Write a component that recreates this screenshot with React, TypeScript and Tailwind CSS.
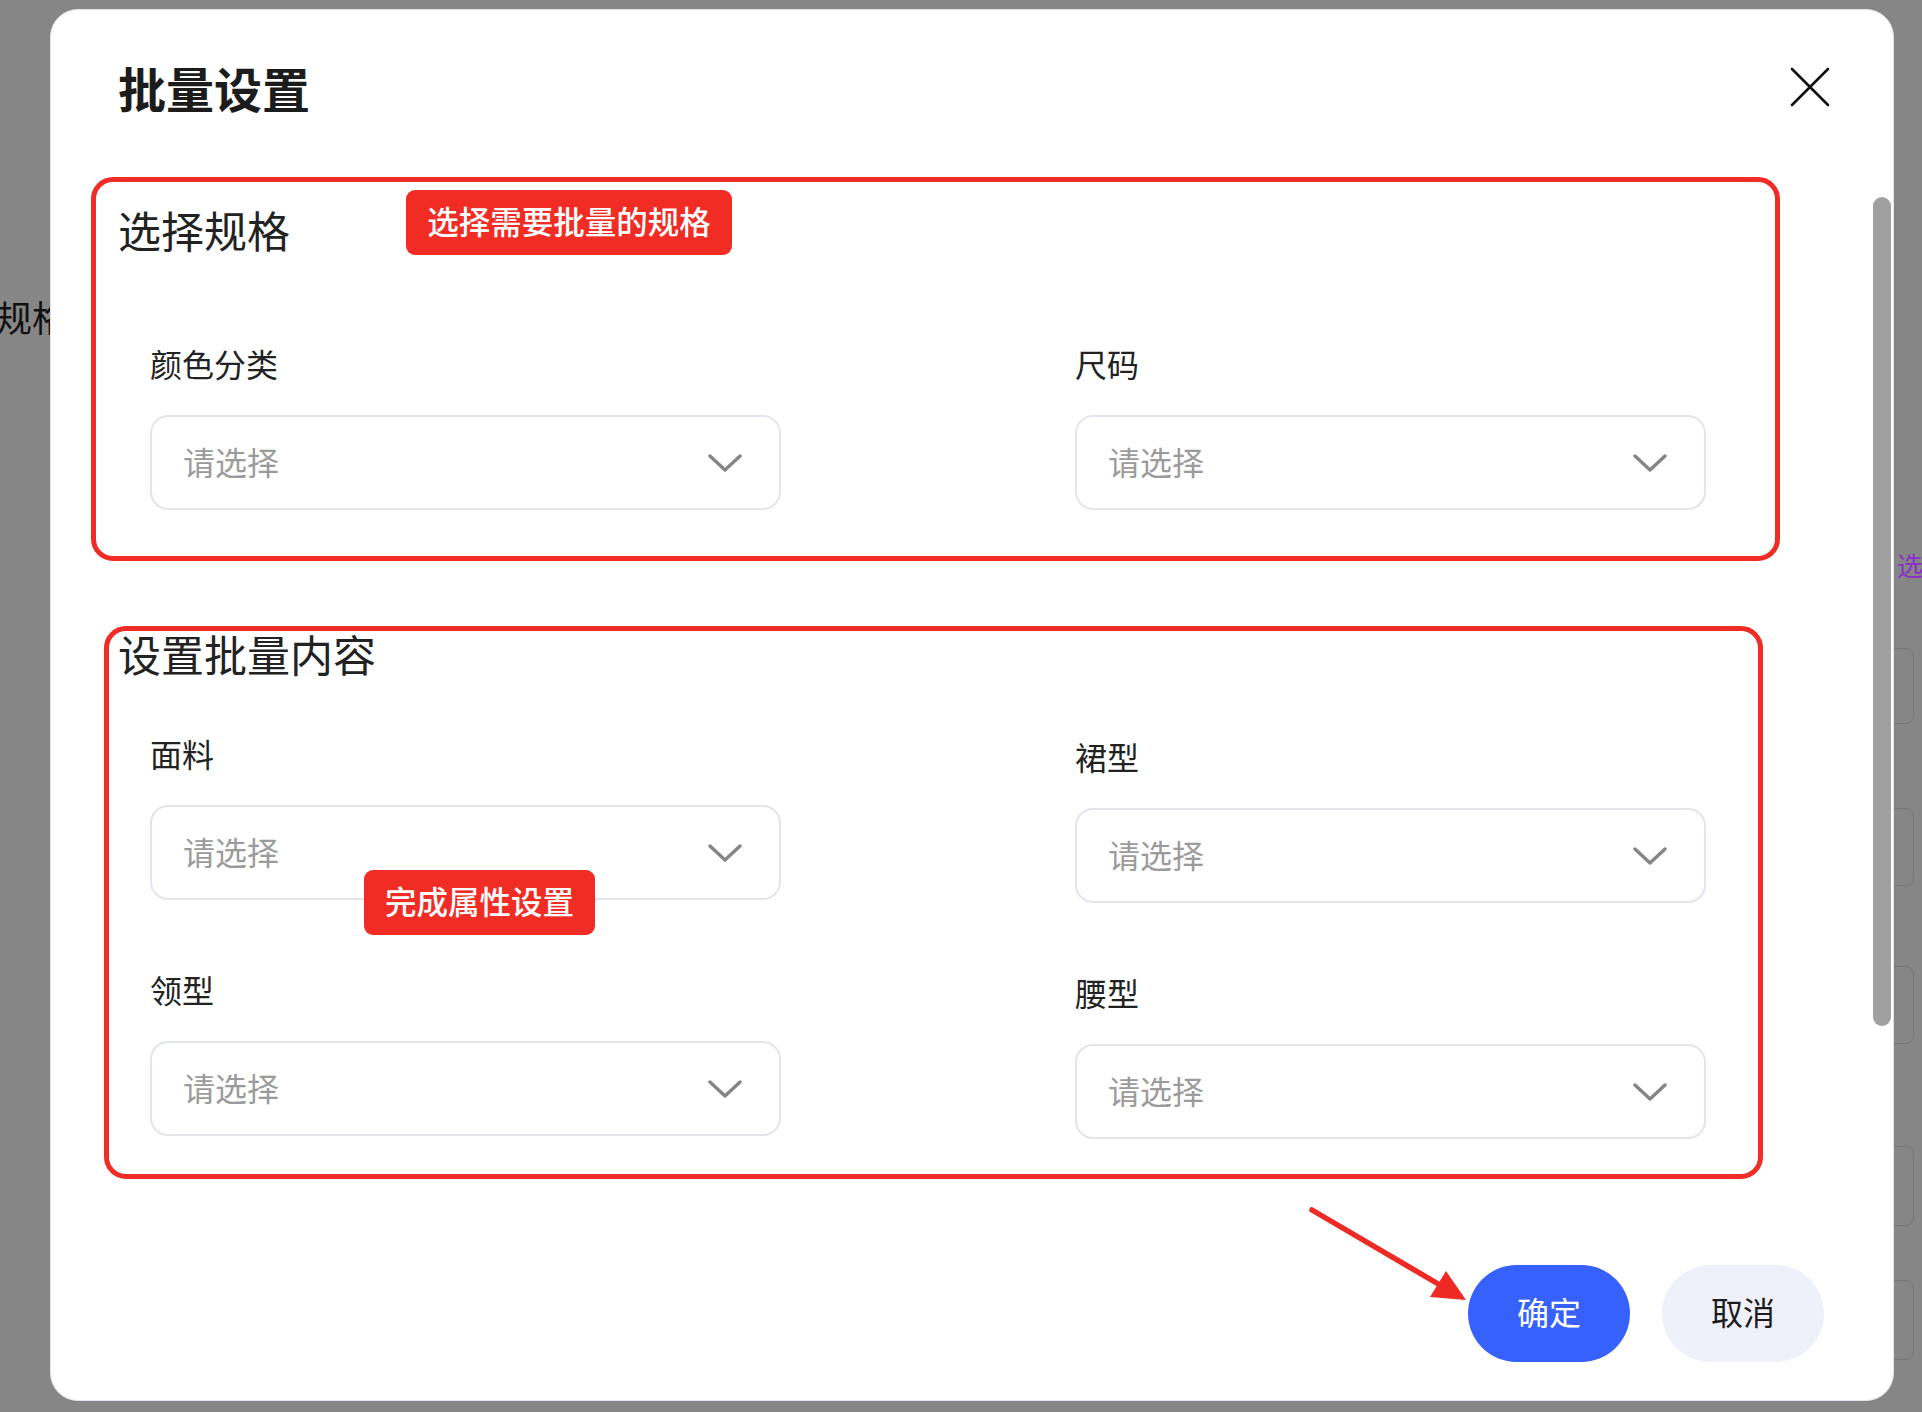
import React from 'react';

const Chevron: React.FC = () => (
  <svg width="34" height="20" viewBox="0 0 34 20" fill="none">
    <polyline points="2,3 17,17 32,3" stroke="#858585" strokeWidth="3.4" strokeLinecap="round" strokeLinejoin="round" />
  </svg>
);

const SelectField: React.FC<{ label: string }> = ({ label }) => (
  <div className="flex flex-col">
    <span className="-translate-y-[1px] text-[32px] leading-none text-[#222]">{label}</span>
    <div className="mt-[35px] flex h-[95px] w-[631px] items-center justify-between rounded-[18px] border-2 border-[#e3e5ee] bg-white pl-[31px] pr-[37px]">
      <span className="-translate-y-[2px] text-[32px] leading-none text-[#9b9b9b]">请选择</span>
      <Chevron />
    </div>
  </div>
);

const Badge: React.FC<{ text: string; className: string }> = ({ text, className }) => (
  <div className={`absolute flex h-[65px] items-center justify-center rounded-[9px] bg-[#f02c25] pb-[3px] text-[31.5px] font-medium leading-none text-white ${className}`}>
    {text}
  </div>
);

export default function App() {
  return (
    <div className="relative h-[1412px] w-[1922px] overflow-hidden bg-[#868686] pl-[50px] pt-[9px] font-['Noto_Sans_CJK_SC','Noto_Sans',sans-serif]">
      {/* page behind the overlay */}
      <span className="absolute left-[-4px] top-[298px] text-[36px] leading-none text-[#111]">规格</span>
      <span className="absolute left-[1897px] top-[552px] text-[26px] leading-none text-[#8b2fc9]">选</span>
      <div className="absolute left-[1872px] top-[648px] h-[76px] w-[42px] rounded-[8px] border border-[#767676]" />
      <div className="absolute left-[1872px] top-[808px] h-[78px] w-[42px] rounded-[8px] border border-[#767676]" />
      <div className="absolute left-[1872px] top-[966px] h-[78px] w-[42px] rounded-[8px] border border-[#767676]" />
      <div className="absolute left-[1872px] top-[1146px] h-[80px] w-[42px] rounded-[8px] border border-[#767676]" />
      <div className="absolute left-[1872px] top-[1280px] h-[80px] w-[42px] rounded-[8px] border border-[#767676]" />

      {/* dialog */}
      <div className="relative flex h-[1392px] w-[1844px] flex-col rounded-[28px] border border-[#e2e3ec] bg-white pl-[40px] pt-[53px]">
        <div className="flex items-center justify-between pl-[27px] pr-[63px]">
          <h1 className="text-[48px] font-bold leading-none text-[#1c1c1c]">批量设置</h1>
          <svg width="40" height="40" viewBox="0 0 40 40" fill="none">
            <path d="M2 2L38 38M38 2L2 38" stroke="#111" strokeWidth="2.6" strokeLinecap="round" />
          </svg>
        </div>

        {/* 选择规格 */}
        <div className="relative mt-[66px] flex h-[384px] w-[1689px] flex-col rounded-[22px] border-[5px] border-[#ef2d26] pl-[22px] pt-[26px]">
          <h2 className="text-[43px] leading-none text-[#222]">选择规格</h2>
          <Badge text="选择需要批量的规格" className="left-[310px] top-[8px] w-[326px]" />
          <div className="ml-[32px] mt-[97px] flex gap-[294px]">
            <SelectField label="颜色分类" />
            <SelectField label="尺码" />
          </div>
        </div>

        {/* 设置批量内容 */}
        <div className="relative ml-[13px] mt-[65px] flex h-[553px] w-[1659px] flex-col rounded-[22px] border-[5px] border-[#ef2d26] pl-[9px] pt-[1px]">
          <h2 className="text-[43px] leading-none text-[#222]">设置批量内容</h2>
          <div className="ml-[32px] mt-[63px] flex gap-[294px]">
            <div className="flex flex-col gap-[74px]">
              <SelectField label="面料" />
              <SelectField label="领型" />
            </div>
            <div className="flex flex-col gap-[74px] pt-[3px]">
              <SelectField label="裙型" />
              <SelectField label="腰型" />
            </div>
          </div>
          <Badge text="完成属性设置" className="left-[255px] top-[239px] w-[231px]" />
        </div>

        {/* footer */}
        <div className="relative mt-[86px] flex justify-end gap-[32px] pr-[69px]">
          <svg className="absolute left-[1209px] top-[-65px]" width="175" height="110" viewBox="0 0 175 110" fill="none">
            <line x1="12" y1="10" x2="140" y2="85" stroke="#ee2a24" strokeWidth="5.5" strokeLinecap="round" />
            <polygon points="166,100 130,97 146,71" fill="#ee2a24" />
          </svg>
          <button className="flex h-[97px] w-[162px] items-center justify-center rounded-full bg-[#3761fd] pb-[5px] text-[32px] leading-none text-white">
            确定
          </button>
          <button className="flex h-[97px] w-[162px] items-center justify-center rounded-full bg-[#eef1fa] pb-[5px] text-[32px] leading-none text-[#1c1c1c]">
            取消
          </button>
        </div>

        {/* scrollbar */}
        <div className="absolute right-[2px] top-[187px] h-[829px] w-[18px] rounded-full bg-[#a0a0a0]" />
      </div>
    </div>
  );
}
